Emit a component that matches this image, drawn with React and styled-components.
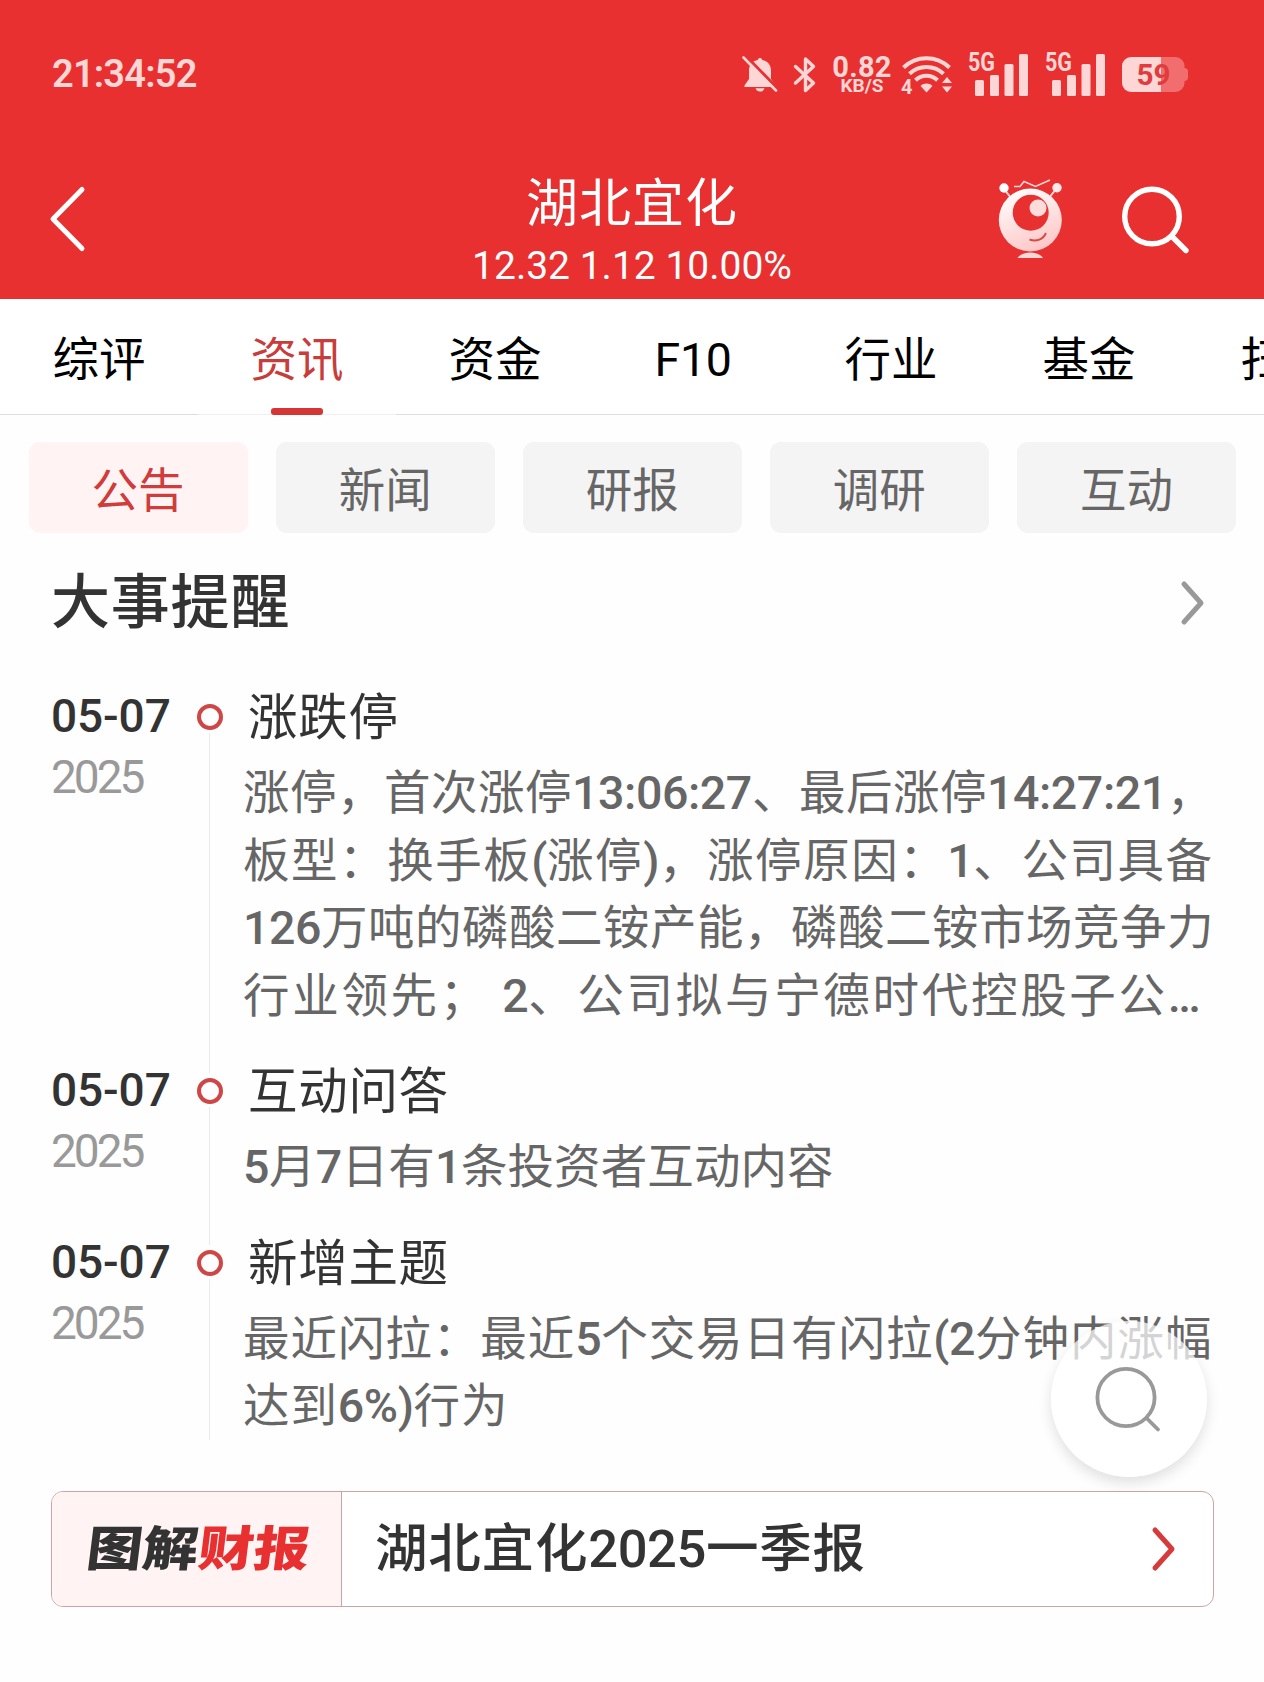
import React, {useState} from 'react';
import styled, {createGlobalStyle} from 'styled-components';

const tabs = ['综评', '资讯', '资金', 'F10', '行业', '基金', '扫雷'];
const chips = ['公告', '新闻', '研报', '调研', '互动'];

const events = [
    {
        day: '05-07',
        year: '2025',
        title: '涨跌停',
        lines: [
            {text: '涨停，首次涨停13:06:27、最后涨停14:27:21，', spacing: 0.6},
            {text: '板型：换手板(涨停)，涨停原因：1、公司具备', spacing: 1.65},
            {text: '126万吨的磷酸二铵产能，磷酸二铵市场竞争力', spacing: 0.6},
            {text: '行业领先； 2、公司拟与宁德时代控股子公…', spacing: 2.8},
        ],
    },
    {
        day: '05-07',
        year: '2025',
        title: '互动问答',
        lines: [{text: '5月7日有1条投资者互动内容', spacing: 0.2}],
    },
    {
        day: '05-07',
        year: '2025',
        title: '新增主题',
        lines: [
            {text: '最近闪拉：最近5个交易日有闪拉(2分钟内涨幅', spacing: 1.05},
            {text: '达到6%)行为', spacing: 1},
        ],
    },
];

// digits and latin marks use another face than the chinese text
const Mixed = ({text, light}) => (
    <>
        {text.split(/([0-9A-Z:%()…]+)/).map((part, i) =>
            i % 2 ? <Num key={i} $light={light}>{part}</Num> : part
        )}
    </>
)

const BellOff = () => (
    <svg width='36' height='38' viewBox='0 0 36 38'>
        <path d="M18 2c1.300 0 2 .8 2.200 1.900 5.400 1 8.800 5.100 8.800 10.600v8.500l4.500 6.500v1.500H2.500v-1.500L7 23v-8.500C7 9 10.400 4.900 15.800 3.900 16 2.800 16.700 2 18 2z" fill="#ffd6d6" />
        <path d="M13.500 32.300h9c-.8 2.200-2.300 3.300-4.500 3.300s-3.700-1.100-4.500-3.300z" fill="#ffd6d6" />
        <path d="M4 0l33 34" stroke="#e83030" strokeWidth="3" />
        <path d="M1.500 1.500l32.500 33" stroke="#ffd6d6" strokeWidth="2.600" strokeLinecap="round" />
    </svg>
)

const Bluetooth = () => (
    <svg width='24' height='38' viewBox='0 0 24 38'>
        <path d="M2.500 10.500L20.500 27 12.500 34.500V3L20.500 10.500 2.500 27" fill="none" stroke="#ffd6d6" strokeWidth="3.400" strokeLinejoin="round" strokeLinecap="round" />
    </svg>
)

const Wifi = () => (
    <svg width='52' height='40' viewBox='0 0 52 40'>
        <g fill="none" stroke="#ffd6d6" strokeWidth="4">
            <path d="M2.500 12.500a33 33 0 0 1 46 0" />
            <path d="M8.500 18.800a24.500 24.500 0 0 1 34 0" />
            <path d="M14.500 25.200a16 16 0 0 1 22 0" />
        </g>
        <path d="M25.500 37.500l-6-6.500c3.400-3.200 8.600-3.200 12 0z" fill="#ffd6d6" />
        <path d="M46 22l5 6H41zM46 37.500l5-6H41z" fill="#ffd6d6" />
        <text x="0" y="38.500" fontFamily="Roboto, sans-serif" fontSize="20" fontWeight="700" fill="#ffd6d6">4</text>
    </svg>
)

const Signal = () => (
    <svg width='62' height='44' viewBox='0 0 62 44'>
        <text x="0" y="18" textLength="27" lengthAdjust="spacingAndGlyphs" fontFamily="Roboto, sans-serif" fontSize="25" fontWeight="700" fill="#ffd6d6">5G</text>
        <g fill="#ffd6d6">
            <rect x="7" y="27" width="9" height="16" rx="1.500" />
            <rect x="22" y="22" width="9" height="21" rx="1.500" />
            <rect x="36.500" y="11" width="9" height="32" rx="1.500" />
            <rect x="51" y="1" width="9" height="42" rx="1.500" />
        </g>
    </svg>
)

const Battery = () => (
    <svg width='68' height='36' viewBox='0 0 68 36'>
        <path d="M39 0h14.500a9 9 0 0 1 9 9v2c2 0 3.500 1.500 3.500 3.500v6c0 2-1.500 3.500-3.500 3.500v2a9 9 0 0 1-9 9H39z" fill="#f26e6e" />
        <path d="M39 0v35H9a9 9 0 0 1-9-9V9a9 9 0 0 1 9-9z" fill="#ffd6d6" />
        <text x="14.500" y="28" textLength="34" lengthAdjust="spacingAndGlyphs" fontFamily="Roboto, sans-serif" fontSize="30" fontWeight="700" fill="#e03c3c">59</text>
    </svg>
)

const Robot = () => (
    <svg width='66' height='82' viewBox='0 0 66 82'>
        <defs>
            <linearGradient id="face" x1="0.2" y1="0" x2="0.6" y2="1">
                <stop offset="0" stopColor="#fff" />
                <stop offset="1" stopColor="#ffc6c6" />
            </linearGradient>
        </defs>
        <g stroke="#ffd6d6" fill="none" strokeWidth="1.600">
            <path d="M7 10l7 9M59 10l-7 9" strokeWidth="2" />
            <path d="M17 7.500h6l4-5 11.500 5L53 1" />
        </g>
        <circle cx="7" cy="9" r="4.700" fill="#fff" />
        <circle cx="60" cy="8.700" r="4.700" fill="#ffe9e9" />
        <circle cx="33.300" cy="41" r="31.500" fill="url(#face)" />
        <circle cx="33.700" cy="33.700" r="18" fill="#e83030" />
        <circle cx="41" cy="29" r="8.500" fill="#ffdcdc" />
        <path d="M32.500 60.500c7 2.500 13.500 0 16.500-6.500" fill="none" stroke="#d84848" strokeWidth="1.900" />
        <path d="M20.500 79c2-3.200 7-5.500 12.800-5.500S44 75.800 46 79z" fill="#ffd6d6" />
    </svg>
)

const SearchIcon = ({color, weight, r, tail = 13.5}) => (
    <svg width='68' height='68' viewBox='0 0 68 68'>
        <g fill="none" stroke={color} strokeWidth={weight} strokeLinecap="round">
            <circle cx="31" cy="30.500" r={r} />
            <path d={`M51.500 51l${tail} ${tail}`} />
        </g>
    </svg>
)

const Chevron = ({color}) => (
    <svg width='24' height='44' viewBox='0 0 24 44'>
        <path d="M3 3l17 19L3 41" fill="none" stroke={color} strokeWidth="5" strokeLinecap="round" strokeLinejoin="round" />
    </svg>
)

export default function App() {

    const [tab, setTab] = useState('资讯')
    const [chip, setChip] = useState('公告')

    return (
        <Page>
            <GlobalStyle />
            <Header>
                <StatusBar>
                    <Clock>21:34:52</Clock>
                    <StatusIcons>
                        <BellOff />
                        <Bluetooth />
                        <Speed>
                            <Rate>0.82</Rate>
                            <Unit>KB/S</Unit>
                        </Speed>
                        <Wifi />
                        <Signal />
                        <Signal />
                        <Battery />
                    </StatusIcons>
                </StatusBar>
                <NavBar>
                    <Back>
                        <svg width='36' height='66' viewBox='0 0 36 66'>
                            <path d="M33 3.500L4 33l29 29.500" fill="none" stroke="#fff" strokeWidth="5" strokeLinecap="round" strokeLinejoin="round" />
                        </svg>
                    </Back>
                    <Stock>
                        <StockName>湖北宜化</StockName>
                        <Quote>12.32 1.12 10.00%</Quote>
                    </Stock>
                    <Actions>
                        <Robot />
                        <SearchIcon color="#fff" weight={5.4} r={27.3} />
                    </Actions>
                </NavBar>
            </Header>
            <Tabs>
                {tabs.map(name => (
                    <Tab key={name} $active={name === tab} onClick={() => setTab(name)}>
                        <Mixed text={name} light />
                    </Tab>
                ))}
            </Tabs>
            <Chips>
                {chips.map(name => (
                    <Chip key={name} $active={name === chip} onClick={() => setChip(name)}>{name}</Chip>
                ))}
            </Chips>
            <SectionHead>
                <SectionTitle>大事提醒</SectionTitle>
                <Chevron color="#999" />
            </SectionHead>
            <Timeline>
                {events.map(item => (
                    <Event key={item.title}>
                        <DateCol>
                            <Day>{item.day}</Day>
                            <Year>{item.year}</Year>
                        </DateCol>
                        <Rail>
                            <Dot />
                            <Line />
                        </Rail>
                        <Content>
                            <EventTitle>{item.title}</EventTitle>
                            {item.lines.map(line => (
                                <TextLine key={line.text} $spacing={line.spacing}>
                                    <Mixed text={line.text} />
                                </TextLine>
                            ))}
                        </Content>
                    </Event>
                ))}
            </Timeline>
            <Report>
                <ReportTag>
                    <Logo>图解<LogoRed>财报</LogoRed></Logo>
                </ReportTag>
                <ReportTitle><Mixed text='湖北宜化2025一季报' /></ReportTitle>
                <Chevron color="#d63a3a" />
            </Report>
            <FloatSearch>
                <SearchIcon color="#999" weight={3.8} r={28.6} tail={11.5} />
            </FloatSearch>
        </Page>
    )
}

const GlobalStyle = createGlobalStyle`
    body {
        margin: 0;
        background-color: #fefefe;
    }
    * {
        box-sizing: border-box;
    }
    svg {
        display: block;
        flex-shrink: 0;
        overflow: visible;
    }
`

const Page = styled.div`
    position: relative;
    width: 1264px;
    height: 1682px;
    overflow: hidden;
    background-color: #fefefe;
    color: #333;
    font-family: 'Noto Sans CJK SC', sans-serif;
    text-spacing-trim: space-all;
`

const Num = styled.span`
    font-family: Roboto, sans-serif;
    font-weight: ${props => props.$light ? 400 : 500};
    letter-spacing: -0.4px;
`

const Header = styled.div`
    height: 299px;
    background-color: #e83030;
    color: #fff;
`

const StatusBar = styled.div`
    height: 149px;
    padding: 0 74px 0 52px;
    display: flex;
    align-items: center;
    justify-content: space-between;
`

const Clock = styled.div`
    font-family: Roboto, sans-serif;
    font-size: 38px;
    font-weight: 600;
    line-height: 40px;
    letter-spacing: -0.8px;
    margin-top: -2px;
    color: #ffd6d6;
`

const StatusIcons = styled.div`
    display: flex;
    align-items: center;
    gap: 15px;
`

const Speed = styled.div`
    width: 60px;
    margin: 0 -6px 0 0;
    display: flex;
    flex-direction: column;
    align-items: center;
    font-family: Roboto, sans-serif;
    font-weight: 700;
    color: #ffd6d6;
`

const Rate = styled.div`
    font-size: 29px;
    line-height: 22px;
    letter-spacing: 0.3px;
`

const Unit = styled.div`
    font-size: 19px;
    line-height: 16px;
`

const NavBar = styled.div`
    height: 150px;
    padding: 0 75px 0 49px;
    display: grid;
    grid-template-columns: 1fr auto 1fr;
    align-items: start;
`

const Back = styled.div`
    padding-top: 37px;
    cursor: pointer;
`

const Stock = styled.div`
    padding-top: 21px;
    padding-left: 26px;
    text-align: center;
`

const StockName = styled.div`
    font-size: 52px;
    line-height: 60px;
    letter-spacing: 1px;
`

const Quote = styled.div`
    font-family: Roboto, sans-serif;
    font-size: 39px;
    line-height: 46px;
    margin-top: 13px;
`

const Actions = styled.div`
    display: flex;
    justify-content: flex-end;
    gap: 58px;
    padding-top: 30px;

    svg:last-child {
        margin-top: 7px;
    }
`

const Tabs = styled.div`
    height: 116px;
    display: flex;
    overflow: hidden;
    background-color: #fff;
`

const Tab = styled.div`
    position: relative;
    flex: 0 0 198px;
    height: 116px;
    border-bottom: 1px solid ${props => props.$active ? '#efefef' : '#ddd'};
    text-align: center;
    font-size: 46.5px;
    line-height: 113px;
    color: ${props => props.$active ? '#c83c3c' : '#000'};
    cursor: pointer;

    &::after {
        content: '';
        display: ${props => props.$active ? 'block' : 'none'};
        position: absolute;
        left: 73px;
        bottom: -1px;
        width: 52px;
        height: 7px;
        border-radius: 3px;
        background-color: #d63535;
    }
`

const Chips = styled.div`
    display: flex;
    gap: 28px;
    padding: 27px 28px 0 28.5px;
`

const Chip = styled.div`
    flex: 1;
    height: 91px;
    border-radius: 11px;
    text-align: center;
    font-size: 46.5px;
    line-height: 90px;
    color: ${props => props.$active ? '#d03b3b' : '#666'};
    background-color: ${props => props.$active ? '#fff3f3' : '#f4f4f4'};
    cursor: pointer;
`

const SectionHead = styled.div`
    height: 150px;
    padding: 0 59px 10px 51px;
    display: flex;
    align-items: center;
    justify-content: space-between;
`

const SectionTitle = styled.div`
    margin-top: -10px;
    font-size: 59px;
    font-weight: 500;
    line-height: 80px;
    letter-spacing: 0.8px;
`

const Timeline = styled.div`
    padding: 0 40px 0 51px;
`

const Event = styled.div`
    display: flex;
`

const DateCol = styled.div`
    width: 145px;
    font-family: Roboto, sans-serif;
    font-size: 46px;
`

const Day = styled.div`
    font-weight: 500;
    line-height: 66px;
    letter-spacing: -0.1px;
`

const Year = styled.div`
    line-height: 57px;
    color: #999;
    letter-spacing: -3px;
`

const Rail = styled.div`
    width: 27px;
    display: flex;
    flex-direction: column;
    align-items: center;
    padding-top: 21px;
`

const Dot = styled.div`
    width: 26px;
    height: 26px;
    flex-shrink: 0;
    border: 4px solid #cf4646;
    border-radius: 50%;
`

const Line = styled.div`
    width: 1px;
    flex: 1;
    margin: 3px 0 -16px;
    background-color: #e9e9e9;

    ${Event}:last-child & {
        margin-bottom: 28px;
    }
`

const Content = styled.div`
    padding: 0 0 32px 20px;
    white-space: nowrap;
`

const EventTitle = styled.div`
    padding-left: 5px;
    margin-bottom: 10px;
    font-size: 49.5px;
    line-height: 62px;
    letter-spacing: 0.7px;
`

const TextLine = styled.div`
    height: 67.5px;
    font-size: 46.5px;
    line-height: 67.5px;
    color: #666;
    letter-spacing: ${props => props.$spacing - 0.1}px;
`

const Report = styled.div`
    height: 116px;
    margin: 23px 50px 0 51px;
    padding-right: 37px;
    display: flex;
    align-items: center;
    border: 1px solid #cba5a5;
    border-radius: 12px;
    overflow: hidden;
    background-color: #fff;
`

const ReportTag = styled.div`
    width: 290px;
    height: 100%;
    padding: 0 0 7px 5px;
    display: flex;
    align-items: center;
    justify-content: center;
    border-right: 1px solid #cba5a5;
    background-color: #fff3f3;
`

const Logo = styled.div`
    font-size: 48px;
    font-weight: 900;
    line-height: 60px;
    transform: skewX(-7deg) scaleX(1.16);
`

const LogoRed = styled.span`
    color: #e83030;
`

const ReportTitle = styled.div`
    flex: 1;
    padding: 0 0 4px 33px;
    font-size: 52.5px;
    font-weight: 500;
    line-height: 80px;
    letter-spacing: 0.8px;
`

const FloatSearch = styled.div`
    position: absolute;
    left: 1050.5px;
    top: 1321px;
    width: 156px;
    height: 156px;
    padding: 4px 0 0 1px;
    display: flex;
    align-items: center;
    justify-content: center;
    border-radius: 50%;
    background-color: rgba(255, 255, 255, 0.72);
    box-shadow: 0 6px 14px rgba(0, 0, 0, 0.12);
    cursor: pointer;
`
